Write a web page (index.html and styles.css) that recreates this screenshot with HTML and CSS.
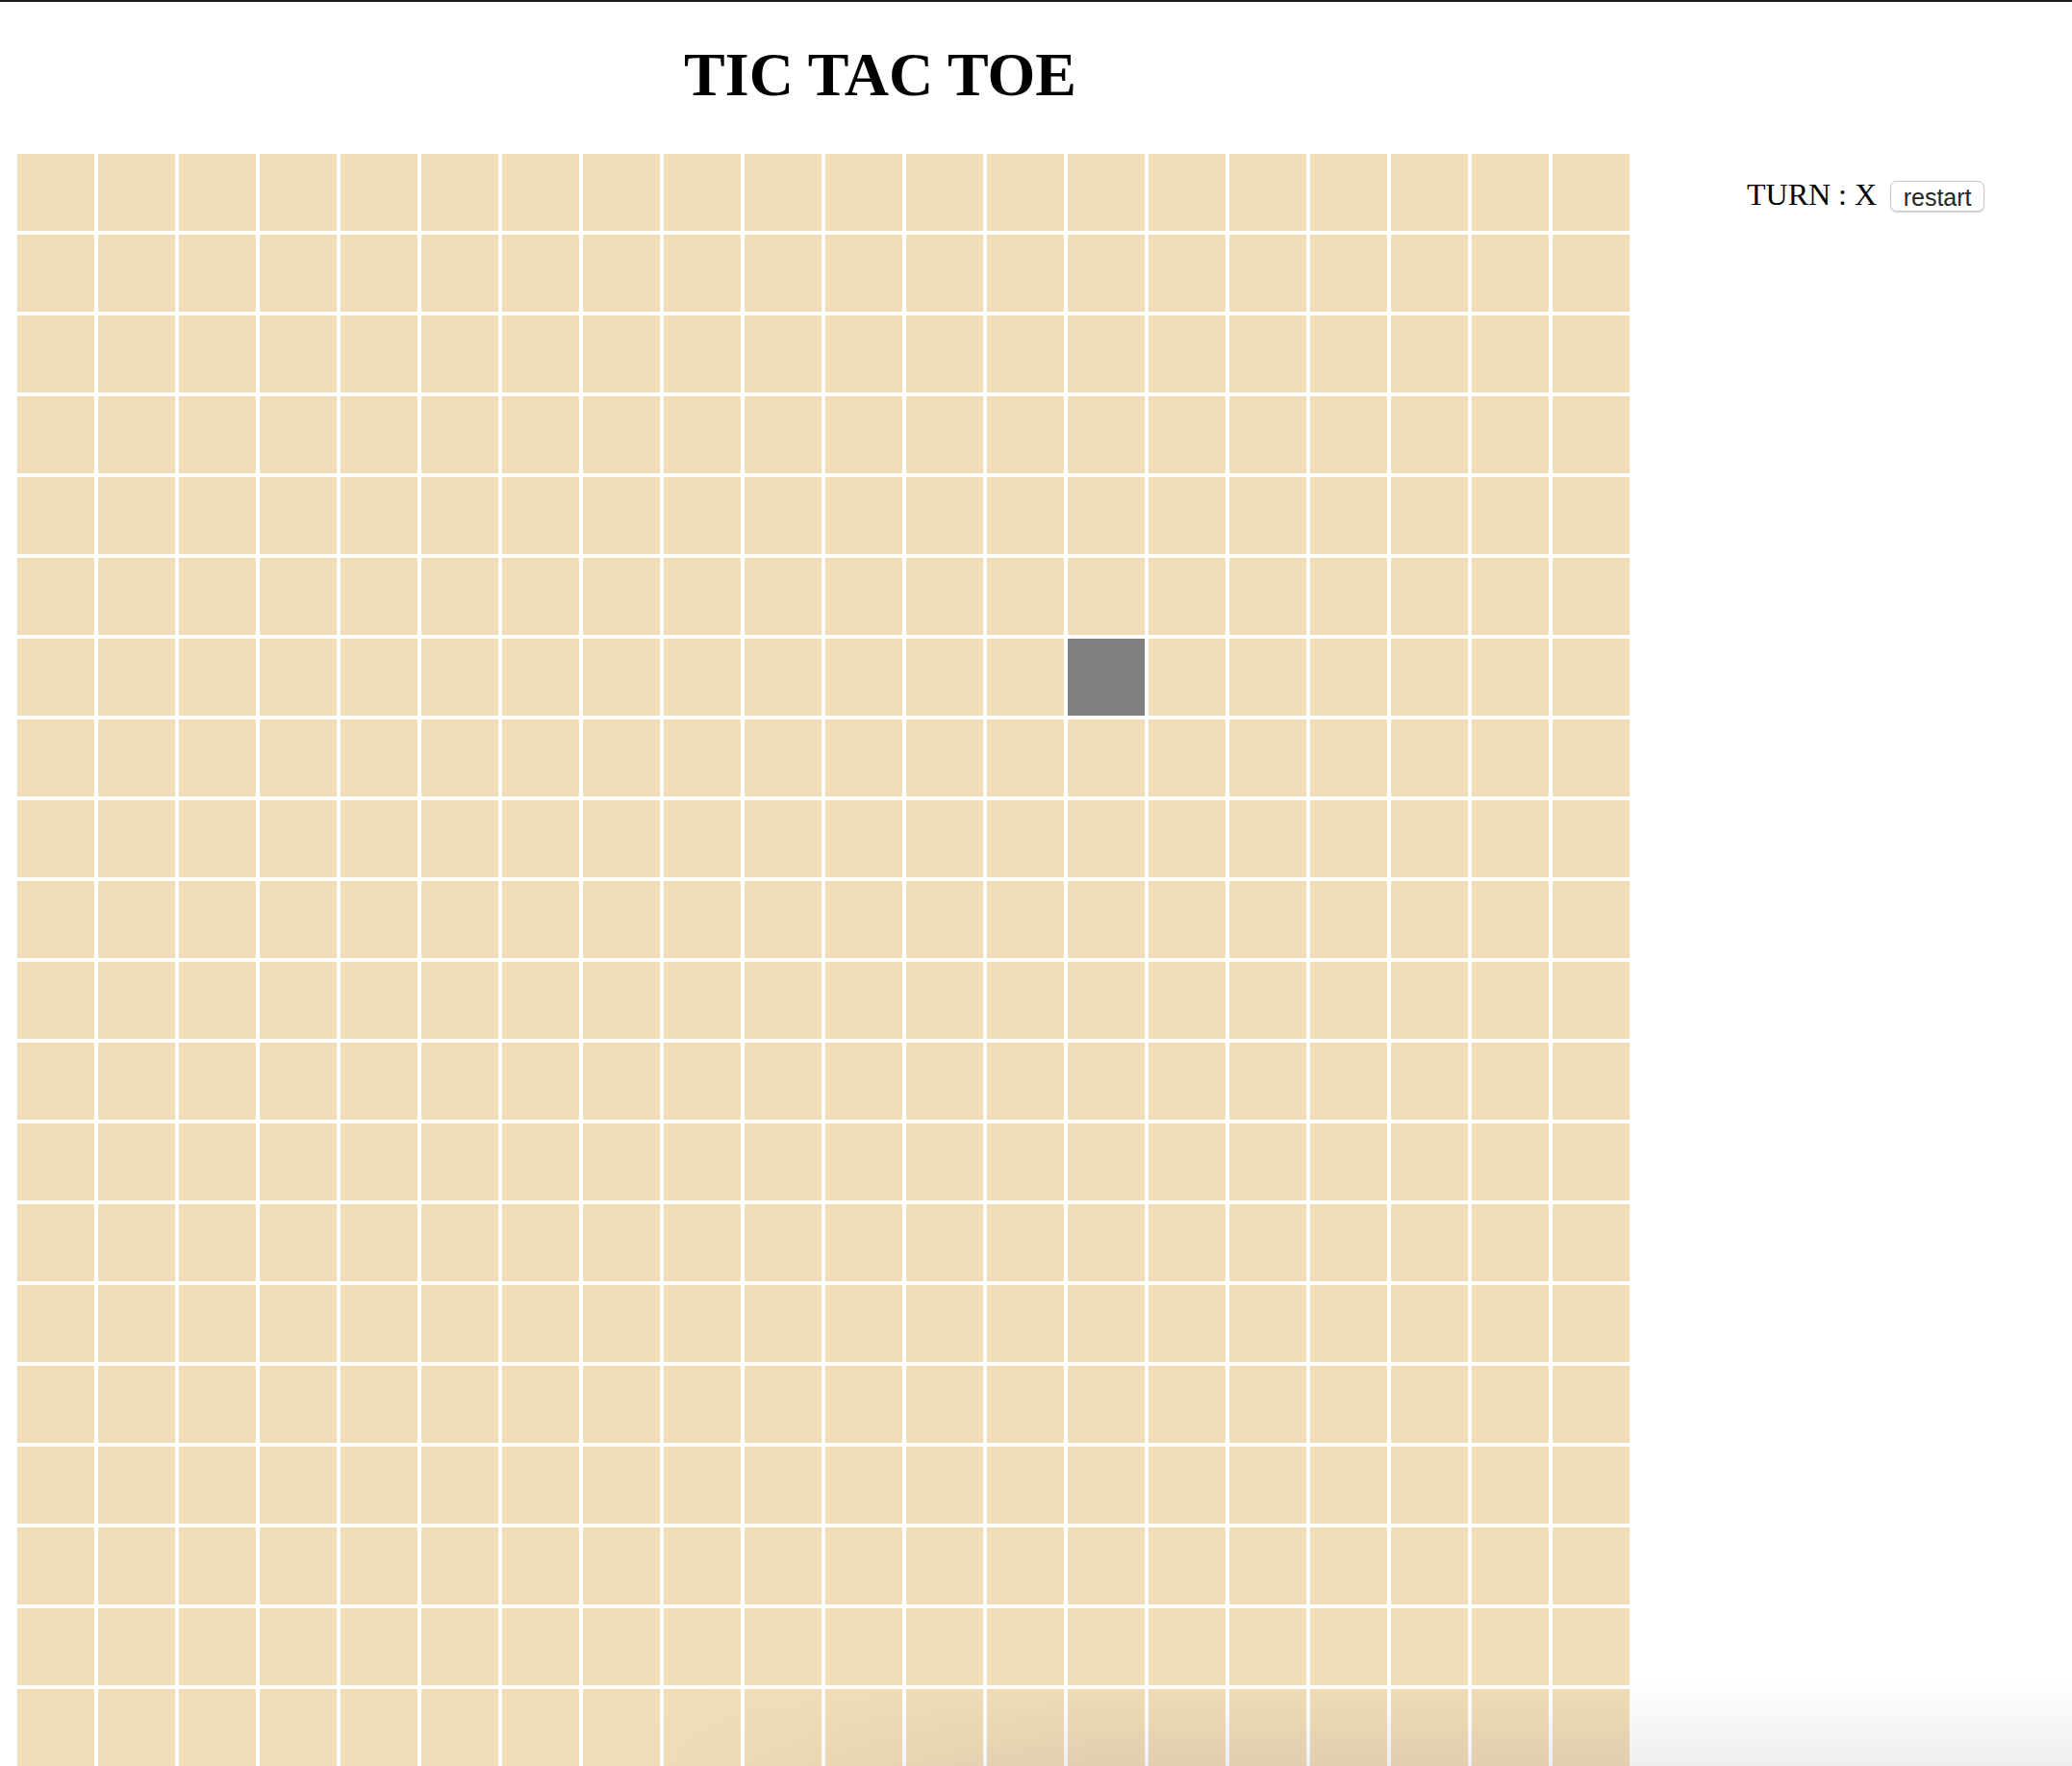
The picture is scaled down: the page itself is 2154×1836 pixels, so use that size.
FILE: index.html
```html
<!DOCTYPE html>
<html lang="en">
<head>
<meta charset="utf-8">
<title>TIC TAC TOE</title>
<link rel="stylesheet" href="styles.css">
</head>
<body>
<div class="window">
  <div class="layout">
    <main class="game">
      <h1 class="title">TIC TAC TOE</h1>
      <div class="board">
        <div class="row"><div class="cell"></div><div class="cell"></div><div class="cell"></div><div class="cell"></div><div class="cell"></div><div class="cell"></div><div class="cell"></div><div class="cell"></div><div class="cell"></div><div class="cell"></div><div class="cell"></div><div class="cell"></div><div class="cell"></div><div class="cell"></div><div class="cell"></div><div class="cell"></div><div class="cell"></div><div class="cell"></div><div class="cell"></div><div class="cell"></div></div>
        <div class="row"><div class="cell"></div><div class="cell"></div><div class="cell"></div><div class="cell"></div><div class="cell"></div><div class="cell"></div><div class="cell"></div><div class="cell"></div><div class="cell"></div><div class="cell"></div><div class="cell"></div><div class="cell"></div><div class="cell"></div><div class="cell"></div><div class="cell"></div><div class="cell"></div><div class="cell"></div><div class="cell"></div><div class="cell"></div><div class="cell"></div></div>
        <div class="row"><div class="cell"></div><div class="cell"></div><div class="cell"></div><div class="cell"></div><div class="cell"></div><div class="cell"></div><div class="cell"></div><div class="cell"></div><div class="cell"></div><div class="cell"></div><div class="cell"></div><div class="cell"></div><div class="cell"></div><div class="cell"></div><div class="cell"></div><div class="cell"></div><div class="cell"></div><div class="cell"></div><div class="cell"></div><div class="cell"></div></div>
        <div class="row"><div class="cell"></div><div class="cell"></div><div class="cell"></div><div class="cell"></div><div class="cell"></div><div class="cell"></div><div class="cell"></div><div class="cell"></div><div class="cell"></div><div class="cell"></div><div class="cell"></div><div class="cell"></div><div class="cell"></div><div class="cell"></div><div class="cell"></div><div class="cell"></div><div class="cell"></div><div class="cell"></div><div class="cell"></div><div class="cell"></div></div>
        <div class="row"><div class="cell"></div><div class="cell"></div><div class="cell"></div><div class="cell"></div><div class="cell"></div><div class="cell"></div><div class="cell"></div><div class="cell"></div><div class="cell"></div><div class="cell"></div><div class="cell"></div><div class="cell"></div><div class="cell"></div><div class="cell"></div><div class="cell"></div><div class="cell"></div><div class="cell"></div><div class="cell"></div><div class="cell"></div><div class="cell"></div></div>
        <div class="row"><div class="cell"></div><div class="cell"></div><div class="cell"></div><div class="cell"></div><div class="cell"></div><div class="cell"></div><div class="cell"></div><div class="cell"></div><div class="cell"></div><div class="cell"></div><div class="cell"></div><div class="cell"></div><div class="cell"></div><div class="cell"></div><div class="cell"></div><div class="cell"></div><div class="cell"></div><div class="cell"></div><div class="cell"></div><div class="cell"></div></div>
        <div class="row"><div class="cell"></div><div class="cell"></div><div class="cell"></div><div class="cell"></div><div class="cell"></div><div class="cell"></div><div class="cell"></div><div class="cell"></div><div class="cell"></div><div class="cell"></div><div class="cell"></div><div class="cell"></div><div class="cell"></div><div class="cell cell-hover"></div><div class="cell"></div><div class="cell"></div><div class="cell"></div><div class="cell"></div><div class="cell"></div><div class="cell"></div></div>
        <div class="row"><div class="cell"></div><div class="cell"></div><div class="cell"></div><div class="cell"></div><div class="cell"></div><div class="cell"></div><div class="cell"></div><div class="cell"></div><div class="cell"></div><div class="cell"></div><div class="cell"></div><div class="cell"></div><div class="cell"></div><div class="cell"></div><div class="cell"></div><div class="cell"></div><div class="cell"></div><div class="cell"></div><div class="cell"></div><div class="cell"></div></div>
        <div class="row"><div class="cell"></div><div class="cell"></div><div class="cell"></div><div class="cell"></div><div class="cell"></div><div class="cell"></div><div class="cell"></div><div class="cell"></div><div class="cell"></div><div class="cell"></div><div class="cell"></div><div class="cell"></div><div class="cell"></div><div class="cell"></div><div class="cell"></div><div class="cell"></div><div class="cell"></div><div class="cell"></div><div class="cell"></div><div class="cell"></div></div>
        <div class="row"><div class="cell"></div><div class="cell"></div><div class="cell"></div><div class="cell"></div><div class="cell"></div><div class="cell"></div><div class="cell"></div><div class="cell"></div><div class="cell"></div><div class="cell"></div><div class="cell"></div><div class="cell"></div><div class="cell"></div><div class="cell"></div><div class="cell"></div><div class="cell"></div><div class="cell"></div><div class="cell"></div><div class="cell"></div><div class="cell"></div></div>
        <div class="row"><div class="cell"></div><div class="cell"></div><div class="cell"></div><div class="cell"></div><div class="cell"></div><div class="cell"></div><div class="cell"></div><div class="cell"></div><div class="cell"></div><div class="cell"></div><div class="cell"></div><div class="cell"></div><div class="cell"></div><div class="cell"></div><div class="cell"></div><div class="cell"></div><div class="cell"></div><div class="cell"></div><div class="cell"></div><div class="cell"></div></div>
        <div class="row"><div class="cell"></div><div class="cell"></div><div class="cell"></div><div class="cell"></div><div class="cell"></div><div class="cell"></div><div class="cell"></div><div class="cell"></div><div class="cell"></div><div class="cell"></div><div class="cell"></div><div class="cell"></div><div class="cell"></div><div class="cell"></div><div class="cell"></div><div class="cell"></div><div class="cell"></div><div class="cell"></div><div class="cell"></div><div class="cell"></div></div>
        <div class="row"><div class="cell"></div><div class="cell"></div><div class="cell"></div><div class="cell"></div><div class="cell"></div><div class="cell"></div><div class="cell"></div><div class="cell"></div><div class="cell"></div><div class="cell"></div><div class="cell"></div><div class="cell"></div><div class="cell"></div><div class="cell"></div><div class="cell"></div><div class="cell"></div><div class="cell"></div><div class="cell"></div><div class="cell"></div><div class="cell"></div></div>
        <div class="row"><div class="cell"></div><div class="cell"></div><div class="cell"></div><div class="cell"></div><div class="cell"></div><div class="cell"></div><div class="cell"></div><div class="cell"></div><div class="cell"></div><div class="cell"></div><div class="cell"></div><div class="cell"></div><div class="cell"></div><div class="cell"></div><div class="cell"></div><div class="cell"></div><div class="cell"></div><div class="cell"></div><div class="cell"></div><div class="cell"></div></div>
        <div class="row"><div class="cell"></div><div class="cell"></div><div class="cell"></div><div class="cell"></div><div class="cell"></div><div class="cell"></div><div class="cell"></div><div class="cell"></div><div class="cell"></div><div class="cell"></div><div class="cell"></div><div class="cell"></div><div class="cell"></div><div class="cell"></div><div class="cell"></div><div class="cell"></div><div class="cell"></div><div class="cell"></div><div class="cell"></div><div class="cell"></div></div>
        <div class="row"><div class="cell"></div><div class="cell"></div><div class="cell"></div><div class="cell"></div><div class="cell"></div><div class="cell"></div><div class="cell"></div><div class="cell"></div><div class="cell"></div><div class="cell"></div><div class="cell"></div><div class="cell"></div><div class="cell"></div><div class="cell"></div><div class="cell"></div><div class="cell"></div><div class="cell"></div><div class="cell"></div><div class="cell"></div><div class="cell"></div></div>
        <div class="row"><div class="cell"></div><div class="cell"></div><div class="cell"></div><div class="cell"></div><div class="cell"></div><div class="cell"></div><div class="cell"></div><div class="cell"></div><div class="cell"></div><div class="cell"></div><div class="cell"></div><div class="cell"></div><div class="cell"></div><div class="cell"></div><div class="cell"></div><div class="cell"></div><div class="cell"></div><div class="cell"></div><div class="cell"></div><div class="cell"></div></div>
        <div class="row"><div class="cell"></div><div class="cell"></div><div class="cell"></div><div class="cell"></div><div class="cell"></div><div class="cell"></div><div class="cell"></div><div class="cell"></div><div class="cell"></div><div class="cell"></div><div class="cell"></div><div class="cell"></div><div class="cell"></div><div class="cell"></div><div class="cell"></div><div class="cell"></div><div class="cell"></div><div class="cell"></div><div class="cell"></div><div class="cell"></div></div>
        <div class="row"><div class="cell"></div><div class="cell"></div><div class="cell"></div><div class="cell"></div><div class="cell"></div><div class="cell"></div><div class="cell"></div><div class="cell"></div><div class="cell"></div><div class="cell"></div><div class="cell"></div><div class="cell"></div><div class="cell"></div><div class="cell"></div><div class="cell"></div><div class="cell"></div><div class="cell"></div><div class="cell"></div><div class="cell"></div><div class="cell"></div></div>
        <div class="row"><div class="cell"></div><div class="cell"></div><div class="cell"></div><div class="cell"></div><div class="cell"></div><div class="cell"></div><div class="cell"></div><div class="cell"></div><div class="cell"></div><div class="cell"></div><div class="cell"></div><div class="cell"></div><div class="cell"></div><div class="cell"></div><div class="cell"></div><div class="cell"></div><div class="cell"></div><div class="cell"></div><div class="cell"></div><div class="cell"></div></div>
      </div>
    </main>
    <aside class="panel">
      <span class="turn">TURN : X</span>
      <button class="restart" type="button">restart</button>
    </aside>
  </div>
  <div class="bottom-shade"></div>
</div>
</body>
</html>
```

FILE: styles.css
```css
html, body {
  margin: 0;
  padding: 0;
  background: #ffffff;
  overflow: hidden;
}

body {
  font-family: "Liberation Serif", "Times New Roman", serif;
  color: #000;
}

.window {
  height: 1836px;
  box-sizing: border-box;
  border-top: 2px solid #1c1c1c;
}

.layout {
  display: flex;
  align-items: flex-start;
  padding-left: 18px;
}

.game {
  width: 1794px;
  flex: none;
}

.title {
  margin: 40px 0 46px;
  font-size: 64px;
  line-height: 72px;
  font-weight: bold;
  text-align: center;
}

.board {
  display: flex;
  flex-direction: column;
  gap: 4px;
  width: 1676px;
}

.row {
  display: flex;
  gap: 4px;
}

.cell {
  width: 80px;
  height: 80px;
  flex: none;
  background: #f2ddb9;
}

.cell-hover {
  background: #818181;
}

.panel {
  display: flex;
  align-items: center;
  gap: 14px;
  padding-top: 185px;
  padding-left: 4px;
}

.turn {
  font-size: 32px;
  line-height: 30px;
  margin-bottom: 4px;
  white-space: nowrap;
}

.restart {
  box-sizing: border-box;
  width: 98px;
  height: 32px;
  padding: 0;
  border: 1px solid #c8c8c8;
  border-radius: 7px;
  background: #ffffff;
  box-shadow: 0 1px 1.5px rgba(0, 0, 0, 0.18);
  font-family: "Liberation Sans", Arial, sans-serif;
  font-size: 25px;
  line-height: 32px;
  color: #262626;
}

.bottom-shade {
  position: fixed;
  left: 0;
  right: 0;
  bottom: 0;
  height: 90px;
  pointer-events: none;
  background: linear-gradient(to bottom, rgba(0, 0, 0, 0), rgba(0, 0, 0, 0.065));
  -webkit-mask-image: linear-gradient(to right, transparent 650px, #000 1150px);
  mask-image: linear-gradient(to right, transparent 650px, #000 1150px);
}
```
